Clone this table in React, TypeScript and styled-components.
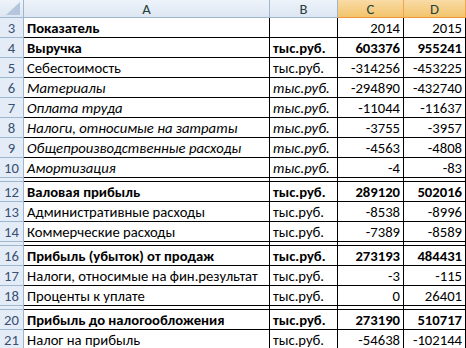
import React from 'react';
import styled, { createGlobalStyle } from 'styled-components';

const GlobalStyle = createGlobalStyle`
  html, body { margin: 0; padding: 0; background: #ffffff; overflow: hidden; }
  body { font-family: Calibri, Carlito, Lato, "Open Sans", sans-serif; }
  #root { width: 466px; height: 348px; overflow: hidden; }
`;

const W = { rh: 24, a: 246, b: 68, c: 66, d: 62 };

type Kind = 'title' | 'bold' | 'italic' | 'normal';
type RowData = { n: number; label?: string; unit?: string; c?: string; d?: string; kind?: Kind; spacer?: boolean };

const rows: RowData[] = [
  { n: 3, label: 'Показатель', c: '2014', d: '2015', kind: 'title' },
  { n: 4, label: 'Выручка', unit: 'тыс.руб.', c: '603376', d: '955241', kind: 'bold' },
  { n: 5, label: 'Себестоимость', unit: 'тыс.руб.', c: '-314256', d: '-453225', kind: 'normal' },
  { n: 6, label: 'Материалы', unit: 'тыс.руб.', c: '-294890', d: '-432740', kind: 'italic' },
  { n: 7, label: 'Оплата труда', unit: 'тыс.руб.', c: '-11044', d: '-11637', kind: 'italic' },
  { n: 8, label: 'Налоги, относимые на затраты', unit: 'тыс.руб.', c: '-3755', d: '-3957', kind: 'italic' },
  { n: 9, label: 'Общепроизводственные расходы', unit: 'тыс.руб.', c: '-4563', d: '-4808', kind: 'italic' },
  { n: 10, label: 'Амортизация', unit: 'тыс.руб.', c: '-4', d: '-83', kind: 'italic' },
  { n: 11, spacer: true },
  { n: 12, label: 'Валовая прибыль', unit: 'тыс.руб.', c: '289120', d: '502016', kind: 'bold' },
  { n: 13, label: 'Административные расходы', unit: 'тыс.руб.', c: '-8538', d: '-8996', kind: 'normal' },
  { n: 14, label: 'Коммерческие расходы', unit: 'тыс.руб.', c: '-7389', d: '-8589', kind: 'normal' },
  { n: 15, spacer: true },
  { n: 16, label: 'Прибыль (убыток) от продаж', unit: 'тыс.руб.', c: '273193', d: '484431', kind: 'bold' },
  { n: 17, label: 'Налоги, относимые на фин.результат', unit: 'тыс.руб.', c: '-3', d: '-115', kind: 'normal' },
  { n: 18, label: 'Проценты к уплате', unit: 'тыс.руб.', c: '0', d: '26401', kind: 'normal' },
  { n: 19, spacer: true },
  { n: 20, label: 'Прибыль до налогообложения', unit: 'тыс.руб.', c: '273190', d: '510717', kind: 'bold' },
  { n: 21, label: 'Налог на прибыль', unit: 'тыс.руб.', c: '-54638', d: '-102144', kind: 'normal' },
];

const Sheet = styled.div`
  display: flex;
  flex-direction: column;
  width: 466px;
  font-size: 14.67px;
  color: #000000;
`;

const HeaderRow = styled.div`
  display: flex;
  height: 18px;
  flex: none;
`;

const Corner = styled.div`
  box-sizing: border-box;
  width: ${W.rh}px;
  height: 18px;
  flex: none;
  display: flex;
  align-items: flex-end;
  justify-content: flex-end;
  padding: 0 3px 2px 0;
  background: linear-gradient(#eef3fa, #dce6f2);
  border-right: 1px solid #9eb6ce;
  border-bottom: 1px solid #9eb6ce;
`;

const ColHeader = styled.div<{ $w: number; $sel?: boolean }>`
  box-sizing: border-box;
  width: ${(p) => p.$w}px;
  height: 18px;
  flex: none;
  display: flex;
  align-items: center;
  justify-content: center;
  font-size: 14.67px;
  color: #27413e;
  background: ${(p) => (p.$sel ? 'linear-gradient(#f9dba6, #f3c46c)' : 'linear-gradient(#eef3fa, #dce6f2)')};
  border-right: 1px solid ${(p) => (p.$sel ? '#f2a44a' : '#9eb6ce')};
  border-bottom: 1px solid ${(p) => (p.$sel ? '#f29536' : '#9eb6ce')};
`;

const GridRow = styled.div<{ $h: number }>`
  display: flex;
  height: ${(p) => p.$h}px;
  flex: none;
`;

const RowNum = styled.div`
  box-sizing: border-box;
  width: ${W.rh}px;
  flex: none;
  display: flex;
  align-items: center;
  justify-content: center;
  background: #e4ecf7;
  color: #3a5070;
  border-right: 1px solid #9eb6ce;
  border-bottom: 1px solid #9eb6ce;
  overflow: hidden;
`;

const Cell = styled.div<{ $w: number; $right?: boolean; $bold?: boolean; $italic?: boolean }>`
  box-sizing: border-box;
  width: ${(p) => p.$w}px;
  flex: none;
  display: flex;
  align-items: center;
  justify-content: ${(p) => (p.$right ? 'flex-end' : 'flex-start')};
  padding: 0 3px;
  white-space: nowrap;
  overflow: visible;
  font-weight: ${(p) => (p.$bold ? 700 : 400)};
  font-style: ${(p) => (p.$italic ? 'italic' : 'normal')};
  border-right: 1px solid #000000;
  border-bottom: 1px solid #000000;
`;

const CornerMark = () => (
  <svg width="14" height="13" viewBox="0 0 14 13">
    <polygon points="14,0 14,13 0,13" fill="#b4c6dc" />
  </svg>
);

export default function App() {
  return (
    <>
      <GlobalStyle />
      <Sheet>
        <HeaderRow>
          <Corner>
            <CornerMark />
          </Corner>
          <ColHeader $w={W.a}>A</ColHeader>
          <ColHeader $w={W.b}>B</ColHeader>
          <ColHeader $w={W.c} $sel>C</ColHeader>
          <ColHeader $w={W.d} $sel>D</ColHeader>
        </HeaderRow>
        {rows.map((r) => {
          if (r.spacer) {
            return (
              <GridRow key={r.n} $h={4}>
                <RowNum />
                <Cell $w={W.a} />
                <Cell $w={W.b} />
                <Cell $w={W.c} />
                <Cell $w={W.d} />
              </GridRow>
            );
          }
          const bold = r.kind === 'bold' || r.kind === 'title';
          const valBold = r.kind === 'bold';
          const italic = r.kind === 'italic';
          return (
            <GridRow key={r.n} $h={20}>
              <RowNum>{r.n}</RowNum>
              <Cell $w={W.a} $bold={bold} $italic={italic}>{r.label}</Cell>
              <Cell $w={W.b} $bold={bold} $italic={italic}>{r.unit}</Cell>
              <Cell $w={W.c} $right $bold={valBold} $italic={false}>{r.c}</Cell>
              <Cell $w={W.d} $right $bold={valBold} $italic={false}>{r.d}</Cell>
            </GridRow>
          );
        })}
      </Sheet>
    </>
  );
}
